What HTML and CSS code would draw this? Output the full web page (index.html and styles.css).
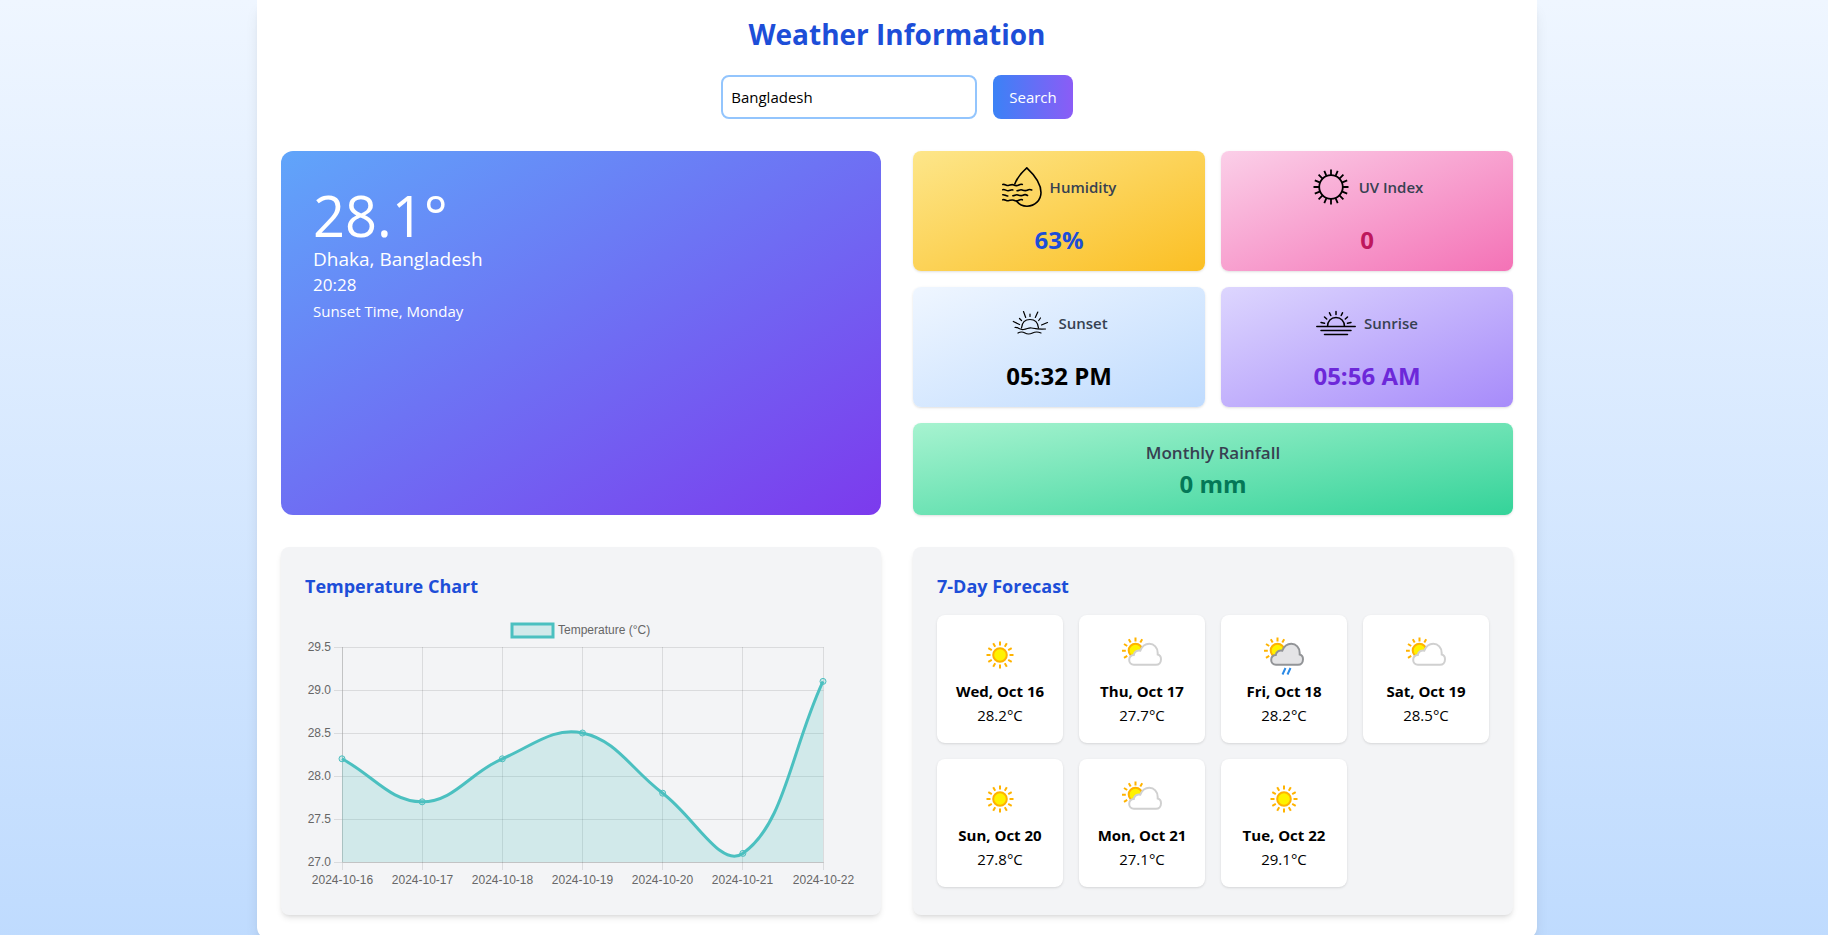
FILE: index.html
```html
<!DOCTYPE html>
<html lang="en">
<head>
<meta charset="utf-8">
<title>Weather Information</title>
<link rel="stylesheet" href="styles.css">
</head>
<body>
<svg class="defs" aria-hidden="true">
  <defs>
    <symbol id="rays" viewBox="0 0 40 40">
      <g stroke="#ffb300" stroke-width="2" stroke-linecap="butt">
        <path d="M20 6.500v4M20 29.500v4M6.500 20h4M29.500 20h4M13.200 8.300l2 3.500M24.800 28.200l2 3.500M8.300 13.200l3.500 2M28.200 24.800l3.500 2M8.300 26.800l3.500-2M28.200 15.200l3.500-2M13.200 31.700l2-3.500M24.800 11.800l2-3.500"/>
      </g>
    </symbol>
    <symbol id="sunny" viewBox="0 0 40 40">
      <use href="#rays" width="40" height="40"/>
      <circle cx="20" cy="20" r="6.800" fill="#fff200" stroke="#ffb300" stroke-width="2"/>
    </symbol>
    <symbol id="partly" viewBox="0 0 40 40">
      <path d="M13.500 2.500v4M6.800 4.300l1.900 3.300M20.200 4.300l-1.900 3.300M2 9l3.200 2M0 15.800h3.800M2 22.800l3.200-2" fill="none" stroke="#ffb300" stroke-width="2"/>
      <circle cx="13.500" cy="15.500" r="6.800" fill="#fff200" stroke="#ffb300" stroke-width="2"/>
    </symbol>
    <path id="cloud" d="M12 29.800C9 29.800 7.200 27.700 7.200 25C7.200 22 9.200 20.200 11.800 20C12.200 16.800 15 15.100 18.300 15.700C20 11.300 23.500 8.800 27.300 8.800C32 8.800 35.700 12.500 35.700 18V19.500C37.600 19.900 39 21.900 39 24.300C39 27.500 37 29.800 34 29.800Z"/>
  </defs>
</svg>

<main class="page">
  <h1 class="title">Weather Information</h1>
  <form class="search">
    <input class="search-input" type="text" value="Bangladesh" aria-label="Location">
    <button class="search-button" type="button">Search</button>
  </form>

  <div class="columns">
    <section class="current">
      <p class="current-temp">28.1°</p>
      <p class="current-place">Dhaka, Bangladesh</p>
      <p class="current-time">20:28</p>
      <p class="current-day">Sunset Time, Monday</p>
    </section>

    <section class="stats">
      <article class="stat humidity">
        <div class="stat-head">
          <svg class="stat-icon" viewBox="0 0 40 40" fill="none" stroke="#000" stroke-width="1.600" stroke-linecap="round" stroke-linejoin="round">
            <path d="M12.800 17C15 11 20 5 24.800 .8C32 7.500 39 17 39 25.500C39 33 33 39.200 25 39.200C20.500 39.200 17 37.300 14.500 34"/>
            <path d="M.8 17.500c2-.8 3.500 1.300 5.500 1s3.500-1.500 5.500-.5s3.500 .8 5 0s2.500-1 3.500-.5M.8 22.700c2-.8 3.500 1.300 5.500 1s3-1.300 4.500-.8M15 23.700c2 0 3-1.500 5-.8s3.500 1.200 5.200 .3s3-.9 4.500-.3M.8 27.700c2-.3 3 1.500 5 1.300M10.800 28.700c2 0 3-1.500 5-.8s3.500 1.200 5.200 .3s3-.7 4.500 .3M.8 32.800c2-.8 3.500 1.300 5.500 1s3.500-1.500 5.500-.5s3.500 .8 5 0s2.500-1 3.500-.5"/>
          </svg>
          <h2 class="stat-name">Humidity</h2>
        </div>
        <p class="stat-value">63%</p>
      </article>
      <article class="stat uv">
        <div class="stat-head">
          <svg class="stat-icon" viewBox="0 0 40 40" fill="none" stroke="#000" stroke-width="1.800">
            <circle cx="20" cy="20" r="11.800"/>
            <path d="M20 2.500v6M20 31.500v6M2.500 20h6M31.500 20h6M13.300 3.800l2.300 5.500M24.400 30.700l2.300 5.500M3.800 13.300l5.500 2.300M30.700 24.400l5.500 2.300M3.800 26.700l5.500-2.300M30.700 15.600l5.500-2.300M13.300 36.200l2.300-5.500M24.400 9.300l2.300-5.500M7.600 7.600l4.200 4.200M28.200 28.200l4.200 4.200M7.600 32.400l4.200-4.200M28.200 11.800l4.200-4.200"/>
          </svg>
          <h2 class="stat-name">UV Index</h2>
        </div>
        <p class="stat-value">0</p>
      </article>
      <article class="stat sunset">
        <div class="stat-head">
          <svg class="stat-icon" viewBox="0 0 40 40" fill="none" stroke="#000" stroke-width="1.200" stroke-linecap="round">
            <path d="M11.500 25C12 19.500 15.500 16.500 20 16.500S28 19.500 28.500 25"/>
            <path d="M5 24.500C8.500 24 9.500 27 13.500 26.500S18.500 24.500 21.500 25S27.500 26.500 35.500 26M8 30Q11.500 28 15 30T22.500 30T31 30"/>
            <path d="M20 11v2.500M13.500 8.500l2.200 6M27.800 9l-2.500 5.500M9.500 15.500l2 2M30.500 15l-1.800 2.500M3.300 18.500l6.200 3M37.500 19.500l-6 2.500"/>
          </svg>
          <h2 class="stat-name">Sunset</h2>
        </div>
        <p class="stat-value">05:32 PM</p>
      </article>
      <article class="stat sunrise">
        <div class="stat-head">
          <svg class="stat-icon" viewBox="0 0 40 40" fill="none" stroke="#000" stroke-width="1.500" stroke-linecap="round">
            <path d="M.8 23.500h38.400M5 27.500h30M8.500 31.500h23M11.500 23.500C11.500 18 15 14.500 20 14.500S28.500 18 28.500 23.500"/>
            <path d="M20 8.500v3M13.500 9.800l1.300 2.700M26.500 9.800l-1.300 2.700M8.500 14l2.200 2M31.500 14l-2.200 2M5 19.500l3.500.8M35 19.500l-3.500.8"/>
          </svg>
          <h2 class="stat-name">Sunrise</h2>
        </div>
        <p class="stat-value">05:56 AM</p>
      </article>
      <article class="stat rainfall">
        <h2 class="rainfall-name">Monthly Rainfall</h2>
        <p class="stat-value">0 mm</p>
      </article>
    </section>

    <section class="panel">
      <h2 class="panel-title">Temperature Chart</h2>
      <svg class="chart" viewBox="0 0 552 276" role="img" aria-label="Temperature by day"></svg>
    </section>

    <section class="panel">
      <h2 class="panel-title">7-Day Forecast</h2>
      <div class="days"></div>
    </section>
  </div>
</main>
<script src="app.js"></script>
</body>
</html>
```
FILE: app.js
```js
const days = [
  ["2024-10-16", "Wed, Oct 16", 28.2, "sunny"],
  ["2024-10-17", "Thu, Oct 17", 27.7, "partly"],
  ["2024-10-18", "Fri, Oct 18", 28.2, "rain"],
  ["2024-10-19", "Sat, Oct 19", 28.5, "partly"],
  ["2024-10-20", "Sun, Oct 20", 27.8, "sunny"],
  ["2024-10-21", "Mon, Oct 21", 27.1, "partly"],
  ["2024-10-22", "Tue, Oct 22", 29.1, "sunny"]
];

const icons = {
  sunny: '<use href="#sunny" width="40" height="40"/>',
  partly: '<use href="#partly" width="40" height="40"/><use href="#cloud" class="cloud-white"/>',
  rain: '<use href="#partly" width="40" height="40"/><use href="#cloud" class="cloud-grey"/><path class="drops" d="M21.500 33l-3 6.500M26.500 33l-3 6.500"/>'
};

document.querySelector(".days").innerHTML = days.map(([, name, temp, icon]) =>
  `<article class="day"><svg class="day-icon" viewBox="0 0 40 40">${icons[icon]}</svg>` +
  `<h3 class="day-name">${name}</h3><p class="day-temp">${temp.toFixed(1)}°C</p></article>`
).join("");

// Plot area of the chart, in viewBox units.
const area = { left: 37, right: 518, top: 32, bottom: 247 };
const x = i => area.left + (area.right - area.left) * i / (days.length - 1);
const y = t => area.bottom - (area.bottom - area.top) * (t - 27) / 2.5;
const points = days.map((d, i) => ({ x: x(i), y: y(d[2]) }));

// Spline control points with a tension of 0.4.
const controls = points.map((p, i) => {
  const prev = points[i - 1] || p;
  const next = points[i + 1] || p;
  const d01 = Math.hypot(p.x - prev.x, p.y - prev.y);
  const d12 = Math.hypot(next.x - p.x, next.y - p.y);
  const fa = 0.4 * d01 / (d01 + d12);
  const fb = 0.4 * d12 / (d01 + d12);
  const dx = next.x - prev.x;
  const dy = next.y - prev.y;
  return { in: [p.x - fa * dx, p.y - fa * dy], out: [p.x + fb * dx, p.y + fb * dy] };
});
let line = `M${points[0].x} ${points[0].y}`;
for (let i = 1; i < points.length; i++) {
  line += `C${controls[i - 1].out} ${controls[i].in} ${points[i].x} ${points[i].y}`;
}

let svg = "";
for (let t = 27; t <= 29.5; t += 0.5) {
  const gy = Math.floor(y(t)) + 0.5;
  svg += `<path class="${t === 27 ? "axis" : "grid"}" d="M${area.left + 0.5} ${gy}H${area.right + 0.5}"/>` +
    `<path class="grid" d="M${area.left - 8} ${gy}h8"/>` +
    `<text class="tick" x="${area.left - 11}" y="${gy + 3}" text-anchor="end">${t.toFixed(1)}</text>`;
}
days.forEach((d, i) => {
  const gx = Math.floor(x(i)) + 0.5;
  svg += `<path class="${i === 0 ? "axis" : "grid"}" d="M${gx} ${area.top}V${area.bottom}"/>` +
    `<path class="grid" d="M${gx} ${area.bottom}v8"/>` +
    `<text class="tick" x="${gx}" y="269" text-anchor="middle">${d[0]}</text>`;
});
svg += `<path class="fill" d="${line}V${area.bottom}H${area.left}Z"/><path class="line" d="${line}"/>`;
svg += points.map(p => `<circle class="point" cx="${p.x}" cy="${p.y}" r="3"/>`).join("");
svg += '<rect class="legend" x="207" y="9" width="41" height="13"/>' +
  '<text class="tick" x="253" y="19">Temperature (°C)</text>';
document.querySelector(".chart").innerHTML = svg;
```
FILE: styles.css
```css
* { box-sizing: border-box; }
body {
  margin: 0;
  padding-right: 34px;
  min-height: 100vh;
  font: 15px/24px "Open Sans", "Noto Sans", sans-serif;
  color: #000;
  background: linear-gradient(to bottom, #eff6ff, #bfdbfe);
}
h1, h2, h3, p { margin: 0; font-size: inherit; font-weight: inherit; }
.defs { position: absolute; width: 0; height: 0; }
.page {
  max-width: 1280px;
  margin: 0 auto;
  padding: 16px 24px 24px;
  background: #fff;
  border-radius: 0 0 12px 12px;
  box-shadow: 0 10px 15px -3px rgba(0, 0, 0, .1), 0 4px 6px -4px rgba(0, 0, 0, .1);
}
.title { font-size: 28px; line-height: 36px; font-weight: 700; color: #1d4ed8; text-align: center; }
.search { display: flex; justify-content: center; gap: 16px; margin: 23px 0 32px; }
.search-input {
  width: 256px; height: 44px; padding: 8px;
  border: 2px solid #93c5fd; border-radius: 8px;
  background: #fff; color: #000; font: inherit;
}
.search-button {
  padding: 8px 16px; border: 0; border-radius: 8px;
  background: linear-gradient(to right, #3b82f6, #8b5cf6);
  color: #fff; font: inherit;
}
.columns { display: grid; grid-template-columns: 1fr 1fr; gap: 32px; }
.current {
  padding: 32px; border-radius: 12px; color: #fff;
  background: linear-gradient(to bottom right, #60a5fa, #7c3aed);
}
.current-temp { font-size: 56px; line-height: 64px; }
.current-place { font-size: 19px; line-height: 24px; }
.current-time { font-size: 17px; line-height: 28px; }
.current-day { line-height: 24px; }
.stats { display: grid; grid-template-columns: 1fr 1fr; gap: 16px; }
.stat {
  padding: 16px 16px 14px; border-radius: 8px; text-align: center;
  box-shadow: 0 1px 3px rgba(0, 0, 0, .1), 0 1px 2px -1px rgba(0, 0, 0, .1);
}
.stat-head { display: flex; justify-content: center; align-items: center; gap: 8px; margin-bottom: 16px; }
.stat-icon { width: 40px; height: 40px; }
.stat-name { font-weight: 600; color: #374151; }
.stat-value { font-size: 24px; line-height: 34px; font-weight: 700; }
.humidity { background: linear-gradient(to bottom right, #fde68a, #fbbf24); }
.humidity .stat-value { color: #1d4ed8; }
.uv { background: linear-gradient(to bottom right, #fbcfe8, #f472b6); }
.uv .stat-value { color: #be185d; }
.sunset { background: linear-gradient(to bottom right, #eff6ff, #bfdbfe); }
.sunrise { background: linear-gradient(to bottom right, #ddd6fe, #a78bfa); }
.sunrise .stat-value { color: #6d28d9; }
.rainfall { grid-column: span 2; background: linear-gradient(to bottom right, #a7f3d0, #34d399); }
.rainfall .stat-value { color: #047857; }
.rainfall-name { font-size: 17px; line-height: 28px; font-weight: 600; color: #374151; }
.panel {
  padding: 24px; border-radius: 8px; background: #f3f4f6;
  box-shadow: 0 4px 6px -1px rgba(0, 0, 0, .1), 0 2px 4px -2px rgba(0, 0, 0, .1);
}
.panel-title { margin-bottom: 14px; font-size: 18px; line-height: 30px; font-weight: 700; color: #1d4ed8; }
.chart { display: block; width: 100%; overflow: visible; }
.chart path, .chart rect, .chart circle { fill: none; }
.chart .grid { stroke: rgba(0, 0, 0, .1); }
.chart .axis { stroke: rgba(0, 0, 0, .2); }
.chart .line { stroke: #4bc0c0; stroke-width: 3; }
.chart .fill { fill: rgba(75, 192, 192, .2); }
.chart .point { fill: rgba(75, 192, 192, .2); stroke: #4bc0c0; stroke-width: 1; }
.chart .legend { fill: rgba(75, 192, 192, .2); stroke: #4bc0c0; stroke-width: 3; }
.tick { font: 12px "Liberation Sans", Arial, sans-serif; fill: #666; }
.days { display: grid; grid-template-columns: repeat(4, 1fr); gap: 16px; }
.day {
  padding: 16px 8px; border-radius: 8px; background: #fff; text-align: center;
  box-shadow: 0 1px 3px rgba(0, 0, 0, .1), 0 1px 2px -1px rgba(0, 0, 0, .1);
}
.day-icon { display: block; width: 40px; height: 40px; margin: 4px auto; }
.day-name { font-weight: 700; }
.cloud-white { fill: #fff; stroke: #d0d0d0; stroke-width: 2; }
.cloud-grey { fill: #e4e4e6; stroke: #929497; stroke-width: 2; }
.drops { fill: none; stroke: #2a8ae6; stroke-width: 2; }
```
